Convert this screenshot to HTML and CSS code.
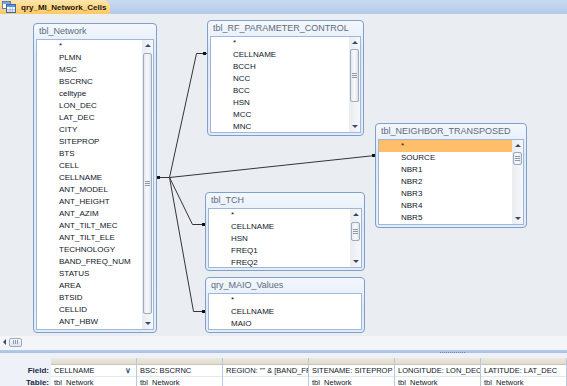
FILE: index.html
```html
<!DOCTYPE html>
<html lang="en">
<head>
  <meta charset="UTF-8">
  <title>qry_MI_Network_Cells</title>
  <link rel="stylesheet" href="styles.css">
</head>
<body>
  <div class="window">
    <div class="tabbar">
      <div class="tab">
        <svg class="tab-icon" width="14" height="12" viewBox="0 0 14 12">
          <rect x="0.5" y="0.5" width="8" height="7" fill="#fff" stroke="#5d7fb0"/>
          <rect x="1" y="1" width="7" height="2" fill="#7fa6dc"/>
          <rect x="4.5" y="3.5" width="9" height="8" fill="#fff" stroke="#3c67a8"/>
          <rect x="5" y="4" width="8" height="2" fill="#5f92d8"/>
          <path d="M5 8.5h8M5 10h8M8 6v5M10.5 6v5" stroke="#9db6d8" stroke-width="0.8"/>
        </svg>
        <span>qry_MI_Network_Cells</span>
      </div>
    </div>

    <div class="canvas">
      <!-- join lines -->
      <svg class="joins" width="567" height="322">
        <g stroke="#353535" stroke-width="1" fill="none">
          <path d="M157 163.5H169.5"/>
          <path d="M169.5 163.5L196.5 39.5H207"/>
          <path d="M169.5 163.5L375 141.5"/>
          <path d="M169.5 163.5L192.5 210.5H205"/>
          <path d="M169.5 163.5L193.5 297.5H205"/>
        </g>
        <g fill="#111">
          <rect x="157" y="162" width="3" height="3"/>
          <rect x="203" y="38" width="3" height="3"/>
          <rect x="372" y="140" width="3" height="3"/>
          <rect x="202" y="209" width="3" height="3"/>
          <rect x="202" y="296" width="3" height="3"/>
        </g>
      </svg>

      <div class="fl fl-network">
        <div class="fl-title">tbl_Network</div>
        <div class="fl-list">
          <ul class="fl-fields">
            <li>*</li>
            <li>PLMN</li>
            <li>MSC</li>
            <li>BSCRNC</li>
            <li>celltype</li>
            <li>LON_DEC</li>
            <li>LAT_DEC</li>
            <li>CITY</li>
            <li>SITEPROP</li>
            <li>BTS</li>
            <li>CELL</li>
            <li>CELLNAME</li>
            <li>ANT_MODEL</li>
            <li>ANT_HEIGHT</li>
            <li>ANT_AZIM</li>
            <li>ANT_TILT_MEC</li>
            <li>ANT_TILT_ELE</li>
            <li>TECHNOLOGY</li>
            <li>BAND_FREQ_NUM</li>
            <li>STATUS</li>
            <li>AREA</li>
            <li>BTSID</li>
            <li>CELLID</li>
            <li>ANT_HBW</li>
          </ul>
          <div class="vscroll">
            <span class="arrow up"></span>
            <div class="track"><span class="thumb"><i></i></span></div>
            <span class="arrow down"></span>
          </div>
        </div>
      </div>

      <div class="fl fl-rf">
        <div class="fl-title">tbl_RF_PARAMETER_CONTROL</div>
        <div class="fl-list">
          <ul class="fl-fields">
            <li>*</li>
            <li>CELLNAME</li>
            <li>BCCH</li>
            <li>NCC</li>
            <li>BCC</li>
            <li>HSN</li>
            <li>MCC</li>
            <li>MNC</li>
          </ul>
          <div class="vscroll">
            <span class="arrow up"></span>
            <div class="track"><span class="thumb"><i></i></span></div>
            <span class="arrow down"></span>
          </div>
        </div>
      </div>

      <div class="fl fl-tch">
        <div class="fl-title">tbl_TCH</div>
        <div class="fl-list">
          <ul class="fl-fields">
            <li>*</li>
            <li>CELLNAME</li>
            <li>HSN</li>
            <li>FREQ1</li>
            <li>FREQ2</li>
          </ul>
          <div class="vscroll">
            <span class="arrow up"></span>
            <div class="track"><span class="thumb"><i></i></span></div>
            <span class="arrow down"></span>
          </div>
        </div>
      </div>

      <div class="fl fl-maio">
        <div class="fl-title">qry_MAIO_Values</div>
        <div class="fl-list">
          <ul class="fl-fields">
            <li>*</li>
            <li>CELLNAME</li>
            <li>MAIO</li>
          </ul>
        </div>
      </div>

      <div class="fl fl-neighbor">
        <div class="fl-title">tbl_NEIGHBOR_TRANSPOSED</div>
        <div class="fl-list">
          <ul class="fl-fields">
            <li class="selected">*</li>
            <li>SOURCE</li>
            <li>NBR1</li>
            <li>NBR2</li>
            <li>NBR3</li>
            <li>NBR4</li>
            <li>NBR5</li>
            <li>NBR6</li>
          </ul>
          <div class="vscroll">
            <span class="arrow up"></span>
            <div class="track"><span class="thumb"><i></i></span></div>
            <span class="arrow down"></span>
          </div>
        </div>
      </div>
    </div>

    <div class="hscroll">
      <span class="arrow left"></span>
      <span class="hthumb"><i></i></span>
    </div>

    <div class="splitter"><span class="dots"></span></div>

    <div class="qbe">
      <div class="qbe-labels">
        <div class="sel"></div>
        <div class="lbl">Field:</div>
        <div class="lbl">Table:</div>
      </div>
      <div class="qbe-col">
        <div class="sel"></div>
        <div class="cell field">CELLNAME<span class="drop">&#8744;</span></div>
        <div class="cell">tbl_Network</div>
      </div>
      <div class="qbe-col">
        <div class="sel"></div>
        <div class="cell field">BSC: BSCRNC</div>
        <div class="cell">tbl_Network</div>
      </div>
      <div class="qbe-col">
        <div class="sel"></div>
        <div class="cell field">REGION: "" &amp; [BAND_FREQ_NUM]</div>
        <div class="cell"></div>
      </div>
      <div class="qbe-col">
        <div class="sel"></div>
        <div class="cell field">SITENAME: SITEPROP</div>
        <div class="cell">tbl_Network</div>
      </div>
      <div class="qbe-col">
        <div class="sel"></div>
        <div class="cell field">LONGITUDE: LON_DEC</div>
        <div class="cell">tbl_Network</div>
      </div>
      <div class="qbe-col">
        <div class="sel"></div>
        <div class="cell field">LATITUDE: LAT_DEC</div>
        <div class="cell">tbl_Network</div>
      </div>
    </div>
  </div>
</body>
</html>
```

FILE: styles.css
```css
body {
  margin: 0;
  font-family: 'Liberation Sans', Arial, sans-serif;
  background-color: #eceff4;
  color: #101828;
}

.window {
  width: 567px;
  height: 386px;
  overflow: hidden;
  display: flex;
  flex-direction: column;
}

/* document tab */
.tabbar {
  height: 14px;
  flex: none;
  background: linear-gradient(#c9dbf1, #b3cae9);
  display: flex;
}

.tab {
  width: 110px;
  height: 14px;
  display: flex;
  align-items: center;
  gap: 5px;
  padding-left: 2px;
  box-sizing: border-box;
  background: linear-gradient(#ffe6ad, #ffc861);
  border-top-right-radius: 7px;
  font-size: 8px;
  font-weight: bold;
  color: #1a1a1a;
}

.tab-icon {
  flex: none;
}

/* design surface */
.canvas {
  position: relative;
  height: 322px;
  flex: none;
  background-color: #eaedf2;
}

.joins {
  position: absolute;
  left: 0;
  top: 0;
}

.fl {
  position: absolute;
  box-sizing: border-box;
  display: flex;
  flex-direction: column;
  padding: 0 2px 2px;
  border: 1px solid #7f9fcd;
  border-radius: 4px;
  background: linear-gradient(#f4f8fd, #dfe9f6 30px, #e4ecf7);
}

.fl-network  { left: 33px;  top: 9px;   width: 124px; height: 310px; }
.fl-rf       { left: 207px; top: 6px;   width: 157px; height: 116px; }
.fl-tch      { left: 205px; top: 178px; width: 160px; height: 79px; }
.fl-maio     { left: 205px; top: 263px; width: 160px; height: 56px; }
.fl-neighbor { left: 375px; top: 109px; width: 152px; height: 105px; }

.fl-title {
  height: 15px;
  line-height: 15px;
  padding-left: 3px;
  font-size: 9px;
  color: #5b6b82;
  white-space: nowrap;
  overflow: hidden;
}

.fl-list {
  flex: 1;
  min-height: 0;
  display: flex;
  background-color: #fff;
  border: 1px solid #9fb7d8;
  overflow: hidden;
}

.fl-fields {
  flex: 1;
  list-style: none;
  margin: 0;
  padding: 0;
}

.fl-fields li {
  height: 12px;
  line-height: 12px;
  padding-left: 22px;
  font-size: 8px;
  color: #101828;
  white-space: nowrap;
}

.fl-fields li.selected {
  background-color: #ffbf6a;
}

/* vertical scrollbar */
.vscroll {
  width: 11px;
  flex: none;
  display: flex;
  flex-direction: column;
  background: linear-gradient(to right, #e9ecf0, #f6f7f9);
}

.arrow {
  height: 11px;
  flex: none;
  display: flex;
  align-items: center;
  justify-content: center;
}

.arrow::before {
  content: "";
  border-left: 3px solid transparent;
  border-right: 3px solid transparent;
}

.arrow.up::before {
  border-bottom: 3px solid #3a4a66;
}

.arrow.down::before {
  border-top: 3px solid #3a4a66;
}

.track {
  flex: 1;
  display: flex;
  flex-direction: column;
}

.thumb {
  display: flex;
  align-items: center;
  justify-content: center;
  margin: 1px 1px 0;
  border: 1px solid #9cabbf;
  border-radius: 2px;
  background: linear-gradient(to right, #e4e9f0, #f8f9fb 50%, #dde3ec);
}

.thumb i {
  width: 5px;
  height: 5px;
  background: repeating-linear-gradient(#8d9aac 0 1px, transparent 1px 2px);
}

.fl-network .thumb  { margin-top: 2px; flex: 1; margin-bottom: 4px; }
.fl-rf .thumb       { height: 51px; }
.fl-tch .thumb      { margin-top: 2px; height: 17px; }
.fl-neighbor .thumb { height: 11px; }

/* horizontal scrollbar */
.hscroll {
  height: 12px;
  flex: none;
  display: flex;
  align-items: center;
  gap: 3px;
  padding-left: 2px;
  background-color: #f3f5f8;
}

.arrow.left {
  width: 4px;
  height: 6px;
}

.arrow.left::before {
  border: 3px solid transparent;
  border-left: none;
  border-right: 3px solid #3a4a66;
}

.hthumb {
  width: 11px;
  height: 7px;
  display: flex;
  align-items: center;
  justify-content: center;
  border: 1px solid #9cabbf;
  border-radius: 2px;
  background: linear-gradient(#f8f9fb, #dde3ec);
}

.hthumb i {
  width: 5px;
  height: 4px;
  background: repeating-linear-gradient(to right, #8d9aac 0 1px, transparent 1px 2px);
}

.splitter {
  height: 8px;
  flex: none;
  display: flex;
  align-items: center;
  justify-content: flex-end;
  padding-right: 102px;
  background: linear-gradient(#f3f5f8 2px, #b5cbe9 2px, #a6c0e4 5px, #eef2f8 5px);
}

.dots {
  width: 25px;
  height: 1px;
  background: repeating-linear-gradient(to right, #6f86a8 0 1px, transparent 1px 2px);
}

/* design grid */
.qbe {
  flex: 1;
  display: flex;
  background-color: #eef2f8;
  padding-top: 2px;
}

.qbe-labels {
  width: 51px;
  flex: none;
}

.qbe-col {
  width: 86px;
  flex: none;
  border-right: 1px solid #b9c9df;
  box-sizing: border-box;
}

.sel {
  height: 6px;
}

.qbe-col .sel {
  background: linear-gradient(#ede9df, #e0dccf);
  border-bottom: 1px solid #c9c4b5;
}

.qbe-labels .sel {
  border-bottom: 1px solid transparent;
}

.lbl {
  height: 12px;
  line-height: 12px;
  text-align: right;
  padding-right: 2px;
  font-size: 8px;
  font-weight: bold;
  color: #1c2a45;
}

.cell {
  position: relative;
  height: 12px;
  line-height: 12px;
  padding-left: 3px;
  font-size: 7.5px;
  color: #101828;
  background-color: #fff;
  white-space: nowrap;
  overflow: hidden;
}

.cell.field {
  border-bottom: 1px solid #e2e8f0;
  height: 11px;
}

.drop {
  position: absolute;
  right: 3px;
  top: 0;
  width: 11px;
  text-align: center;
  font-size: 8px;
  font-weight: bold;
  color: #3a5a8c;
  background-color: #fff;
}
```
